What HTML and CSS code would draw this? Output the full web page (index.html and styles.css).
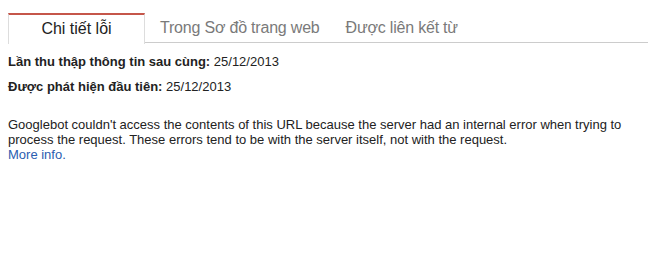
FILE: index.html
```html
<!DOCTYPE html>
<html lang="vi">
<head>
    <meta charset="UTF-8">
    <title>Chi tiết lỗi</title>
    <link rel="stylesheet" href="styles.css">
</head>
<body>
    <div class="panel">
        <div class="tabs">
            <div class="tab active">Chi tiết lỗi</div>
            <div class="tab">Trong Sơ đồ trang web</div>
            <div class="tab">Được liên kết từ</div>
        </div>

        <div class="details">
            <p class="meta"><strong>Lần thu thập thông tin sau cùng:</strong> 25/12/2013</p>
            <p class="meta"><strong>Được phát hiện đầu tiên:</strong> 25/12/2013</p>
            <p class="desc">
                Googlebot couldn't access the contents of this URL because the server had an internal error when trying to
                process the request. These errors tend to be with the server itself, not with the request.
                <br>
                <a href="#">More info.</a>
            </p>
        </div>
    </div>
</body>
</html>
```

FILE: styles.css
```css
* {
    margin: 0;
    padding: 0;
    box-sizing: border-box;
}

body {
    font-family: "Liberation Sans", Arial, sans-serif;
    background: #fff;
    color: #222;
}

.panel {
    width: 648px;
    padding: 13px 0 0 8px;
}

.tabs {
    display: flex;
    border-bottom: 1px solid #ccc;
    height: 30px;
}

.tab {
    font-size: 16px;
    letter-spacing: -0.2px;
    color: #7a7a7a;
    padding: 6px 13px 0;
    white-space: nowrap;
}

.tab.active {
    width: 137px;
    padding: 5px 0 0;
    text-align: center;
    letter-spacing: 0;
    color: #222;
    background: #fff;
    border-top: 2px solid #c5564a;
    border-left: 1px solid #ddd;
    border-right: 1px solid #ddd;
    margin-bottom: -1px;
    height: 31px;
}

.tab.active + .tab {
    padding-left: 15px;
}

.details {
    padding-top: 11px;
    font-size: 13px;
}

.meta {
    line-height: 16px;
    margin-bottom: 9px;
}

.desc {
    margin-top: 22px;
    line-height: 15px;
    color: #222;
}

.desc a {
    color: #2a5db0;
    text-decoration: none;
}
```
